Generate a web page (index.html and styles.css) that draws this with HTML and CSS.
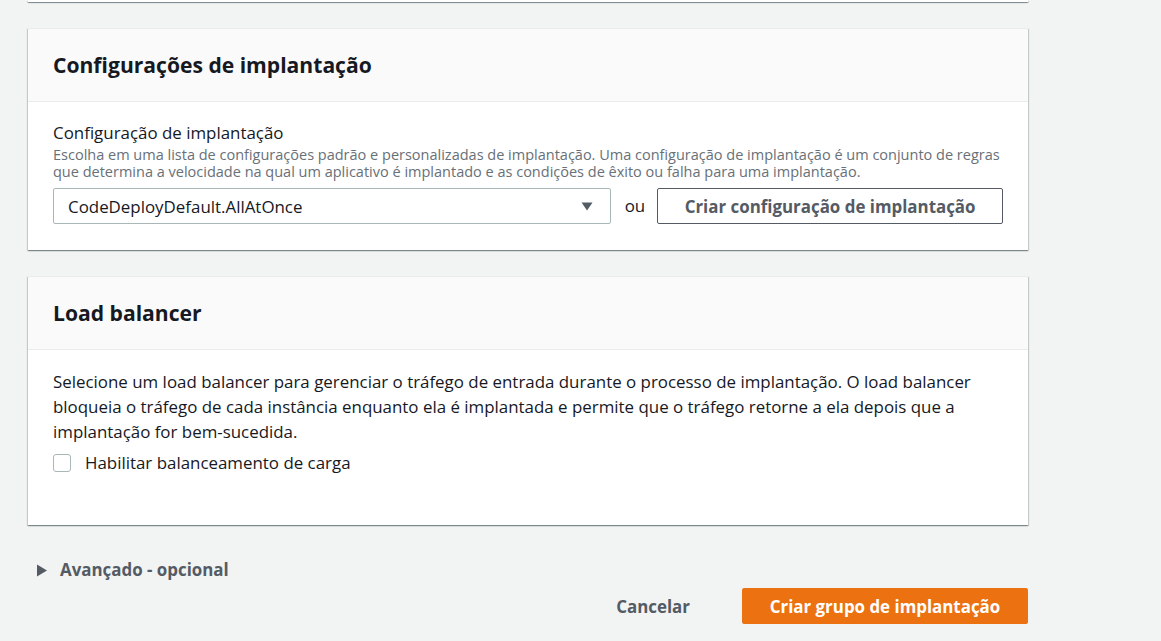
FILE: index.html
```html
<!DOCTYPE html>
<html lang="pt-BR">
<head>
<meta charset="utf-8">
<link rel="stylesheet" href="styles.css">
</head>
<body>
<div class="page">
  <div class="card stub"></div>

  <section class="card">
    <header class="card-header"><h2>Configurações de implantação</h2></header>
    <div class="card-body body-config">
      <div class="label">Configuração de implantação</div>
      <div class="desc">Escolha em uma lista de configurações padrão e personalizadas de implantação. Uma configuração de implantação é um conjunto de regras que determina a velocidade na qual um aplicativo é implantado e as condições de êxito ou falha para uma implantação.</div>
      <div class="select-row">
        <div class="select">
          <span>CodeDeployDefault.AllAtOnce</span>
          <svg class="caret" width="12" height="10" viewBox="0 0 12 10"><path d="M0.5 1.5h11L6 9.5z" fill="#545b64"/></svg>
        </div>
        <span class="or">ou</span>
        <button class="btn-normal">Criar configuração de implantação</button>
      </div>
    </div>
  </section>

  <section class="card">
    <header class="card-header"><h2>Load balancer</h2></header>
    <div class="card-body body-lb">
      <p class="para">Selecione um load balancer para gerenciar o tráfego de entrada durante o processo de implantação. O load balancer bloqueia o tráfego de cada instância enquanto ela é implantada e permite que o tráfego retorne a ela depois que a implantação for bem-sucedida.</p>
      <label class="check"><span class="box"></span><span>Habilitar balanceamento de carga</span></label>
    </div>
  </section>

  <div class="expander">
    <svg width="10" height="13" viewBox="0 0 10 13"><path d="M0 0.5l10 6L0 12.5z" fill="#545b64"/></svg>
    <span>Avançado - opcional</span>
  </div>

  <div class="actions">
    <button class="btn-link">Cancelar</button>
    <button class="btn-primary">Criar grupo de implantação</button>
  </div>
</div>
</body>
</html>
```
FILE: styles.css
```css
* { box-sizing: border-box; }
html, body { margin: 0; padding: 0; }
body {
  background: #f2f3f3;
  font-family: "Open Sans", "Noto Sans", "Liberation Sans", Arial, sans-serif;
  color: #16191f;
  width: 1161px;
  height: 641px;
  overflow: hidden;
}
.page {
  width: 1000px;
  margin-left: 28px;
  display: flex;
  flex-direction: column;
}
.card {
  background: #fff;
  box-shadow: 0 1px 1px 0 rgba(0,28,36,.3), 1px 1px 1px 0 rgba(0,28,36,.15), -1px 1px 1px 0 rgba(0,28,36,.15);
  border-top: 1px solid #eaeded;
  margin-bottom: 26px;
}
.card.stub { height: 2px; border-top: 0; }
.card-header {
  background: #fafafa;
  height: 73px;
  border-bottom: 1px solid #eaeded;
  display: flex;
  align-items: center;
  padding: 0 25px;
}
.card-header h2 {
  margin: 0;
  font-size: 21.1px;
  font-weight: 700;
  line-height: 26px;
}
.body-config { padding: 20px 25px 26px; }
.label { font-size: 16.9px; line-height: 22px; }
.desc { font-size: 14.5px; line-height: 17px; color: #687078; margin-top: 2px; }
.select-row {
  display: flex;
  align-items: center;
  margin-top: 8px;
}
.select {
  width: 558px;
  height: 36px;
  border: 1px solid #aab7b8;
  border-radius: 2px;
  display: flex;
  align-items: center;
  justify-content: space-between;
  padding: 0 17px 0 14px;
  font-size: 16.9px;
}
.or { margin: 0 12px 0 14px; font-size: 16.9px; color: #16191f; line-height: 22px; }
.btn-normal {
  height: 36px;
  width: 346px;
  background: #fff;
  border: 1px solid #545b64;
  border-radius: 2px;
  font-family: inherit;
  font-size: 16.9px;
  font-weight: 700;
  color: #545b64;
  padding: 0;
}
.body-lb { padding: 19px 25px 50px; }
.para { margin: 0; font-size: 16.9px; line-height: 25px; }
.check {
  display: flex;
  align-items: center;
  gap: 14px;
  margin-top: 7px;
  font-size: 16.9px;
  line-height: 24px;
}
.box {
  width: 18px;
  height: 18px;
  border: 1px solid #aab7b8;
  border-radius: 3px;
  background: #fff;
}
.expander {
  display: flex;
  align-items: center;
  gap: 13px;
  margin: 8px 0 0 9px;
  font-size: 16.9px;
  font-weight: 700;
  color: #545b64;
  line-height: 22px;
}
.actions {
  display: flex;
  justify-content: flex-end;
  align-items: center;
  margin-top: 7px;
}
.btn-link {
  background: none;
  border: 0;
  font-family: inherit;
  font-size: 16.9px;
  font-weight: 700;
  color: #545b64;
  padding: 0 20px;
  height: 36px;
  margin-right: 32px;
}
.btn-primary {
  background: #ec7211;
  border: 1px solid #ec7211;
  border-radius: 2px;
  color: #fff;
  font-family: inherit;
  font-size: 16.9px;
  font-weight: 700;
  height: 36px;
  width: 286px;
  padding: 0;
}
```
